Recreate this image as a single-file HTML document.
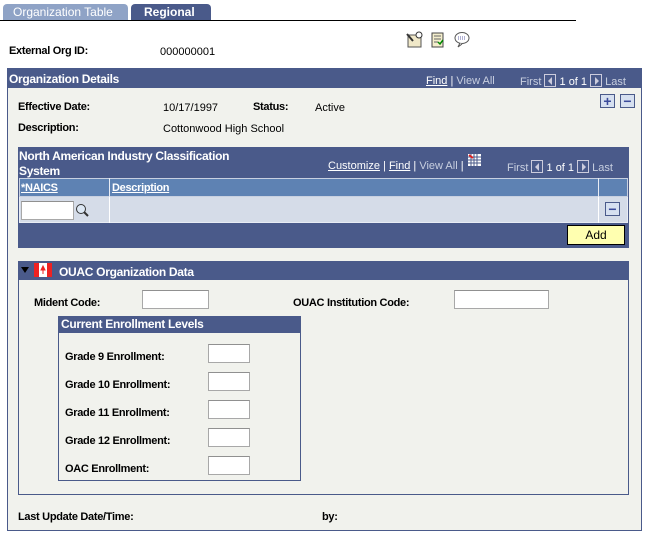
<!DOCTYPE html>
<html><head><style>
*{margin:0;padding:0;box-sizing:border-box}
body{width:646px;height:535px;background:#fff;font-family:"Liberation Sans",Arial,sans-serif;font-size:11px;color:#000;position:relative;overflow:hidden}
.a{position:absolute}
.b{font-weight:bold;letter-spacing:-0.3px}
.hd{background:#4a5a8a;color:#fff}
.inp{position:absolute;background:#fff;border:1px solid #a8a8a8;border-top-color:#909090}
.lk{color:#fff;text-decoration:underline}
.gr{color:#c8cfe0}
.arr{display:inline-block;width:12px;height:13px;border:1px solid #ccd;background:#4a5a8a;vertical-align:-2px;position:relative}
.arr.l:after{content:"";position:absolute;left:3px;top:2px;border-right:4px solid #ccd;border-top:4px solid transparent;border-bottom:4px solid transparent}
.arr.r:after{content:"";position:absolute;left:4px;top:2px;border-left:4px solid #ccd;border-top:4px solid transparent;border-bottom:4px solid transparent}
.btn{position:absolute;width:15px;height:14px;border:1px solid #4a5a8a;background:#d6e0f0;color:#3a4a9a;font-weight:bold;text-align:center;line-height:12px;font-size:14px}
</style></head><body>
<div class="a" style="left:3px;top:4px;width:125px;height:17px;background:#8fa3c6;border-radius:4px 4px 0 0;color:#fff;font-size:12px;padding:1px 0 0 10px">Organization Table</div>
<div class="a" style="left:131px;top:4px;width:80px;height:17px;background:#4a5a8a;border-radius:4px 4px 0 0;color:#fff;font-size:12px;font-weight:bold;padding:1px 0 0 13px">Regional</div>
<div class="a" style="left:0;top:20px;width:576px;height:1px;background:#000"></div>

<div class="a b" style="left:9px;top:45px">External Org ID:</div>
<div class="a" style="left:160px;top:46px">000000001</div>
<svg class="a" style="left:405px;top:31px" width="70" height="18">
<rect x="3" y="4" width="13" height="12" fill="#f0e8c8" stroke="#555"/><path d="M2 3 L8 10" stroke="#333" stroke-width="2"/><circle cx="14" cy="4" r="3" fill="#fff" stroke="#333"/>
<rect x="27" y="2" width="11" height="14" fill="#f4eecc" stroke="#444"/><path d="M29 5h7M29 8h7M29 11h4" stroke="#666"/><path d="M33 11l2 2 3-4" stroke="#080" stroke-width="1.5" fill="none"/>
<ellipse cx="57" cy="7" rx="7" ry="5.5" fill="#fff" stroke="#555"/><path d="M55 12l-2 4 4-3" fill="#fff" stroke="#555"/><path d="M53 6h8M53 8h8" stroke="#66a" stroke-dasharray="1 1"/>
</svg>

<div class="a" style="left:7px;top:68px;width:635px;height:463px;border:1px solid #4a5a8a;background:#f1f2ed"></div>
<div class="a hd" style="left:7px;top:68px;width:635px;height:20px"></div>
<div class="a b" style="left:9px;top:72px;color:#fff;font-size:12px">Organization Details</div>
<div class="a" style="left:426px;top:75px;color:#fff"><span class="lk">Find</span> | <span class="gr">View All</span></div>
<div class="a" style="left:520px;top:74px;color:#c8cfe0">First <span class="arr l"></span> <span style="color:#fff">1 of 1</span> <span class="arr r"></span> Last</div>
<div class="btn" style="left:600px;top:94px">+</div>
<div class="btn" style="left:620px;top:94px">−</div>

<div class="a b" style="left:18px;top:101px">Effective Date:</div>
<div class="a" style="left:163px;top:102px">10/17/1997</div>
<div class="a b" style="left:253px;top:101px">Status:</div>
<div class="a" style="left:315px;top:102px">Active</div>
<div class="a b" style="left:18px;top:122px">Description:</div>
<div class="a" style="left:163px;top:123px">Cottonwood High School</div>

<div class="a hd" style="left:18px;top:147px;width:611px;height:101px"></div>
<div class="a b" style="left:19px;top:149px;color:#fff;font-size:12px;line-height:15px">North American Industry Classification<br>System</div>
<div class="a" style="left:328px;top:160px;color:#fff"><span class="lk">Customize</span> | <span class="lk">Find</span> | <span class="gr">View All</span> |</div>
<svg class="a" style="left:468px;top:154px" width="13" height="12"><rect width="13" height="12" fill="#fff"/><path d="M0 3h13M0 6h13M0 9h13M3 0v12M6 0v12M9 0v12" stroke="#4a5a8a"/><path d="M1 1l4 3" stroke="#d22" stroke-width="2"/></svg>
<div class="a" style="left:507px;top:160px;color:#c8cfe0">First <span class="arr l"></span> <span style="color:#fff">1 of 1</span> <span class="arr r"></span> Last</div>
<div class="a" style="left:19px;top:178px;width:609px;height:19px;background:#5e82b3;border:1px solid #c8d0e0"></div>
<div class="a" style="left:109px;top:178px;width:1px;height:45px;background:#e8ecf4"></div>
<div class="a" style="left:598px;top:178px;width:1px;height:45px;background:#e8ecf4"></div>
<div class="a b lk" style="left:21px;top:182px">*NAICS</div>
<div class="a b lk" style="left:112px;top:182px">Description</div>
<div class="a" style="left:19px;top:197px;width:609px;height:26px;background:#d5dce8;border:1px solid #e8ecf4;border-top:none"></div>
<div class="a" style="left:109px;top:197px;width:1px;height:26px;background:#fff"></div>
<div class="a" style="left:598px;top:197px;width:1px;height:26px;background:#fff"></div>
<div class="inp" style="left:21px;top:201px;width:53px;height:19px"></div>
<svg class="a" style="left:75px;top:203px" width="14" height="15"><circle cx="6" cy="6" r="4.5" fill="#dde8f4" stroke="#333"/><path d="M9 9l4 4" stroke="#333" stroke-width="2"/></svg>
<div class="btn" style="left:605px;top:202px">−</div>
<div class="a" style="left:567px;top:225px;width:58px;height:20px;background:#ffffb0;border:1px solid #000;text-align:center;line-height:18px;font-size:12px">Add</div>

<div class="a" style="left:18px;top:261px;width:611px;height:234px;border:1px solid #4a5a8a"></div>
<div class="a hd" style="left:18px;top:261px;width:611px;height:19px"></div>
<div class="a" style="left:21px;top:267px;width:0;height:0;border-left:4px solid transparent;border-right:4px solid transparent;border-top:6px solid #000"></div>
<svg class="a" style="left:34px;top:263px" width="18" height="14"><rect width="18" height="14" fill="#fff"/><rect width="5" height="14" fill="#e22"/><rect x="13" width="5" height="14" fill="#e22"/><path d="M9 3l2 4h-4z M9 5v6" stroke="#e22" fill="#e22"/></svg>
<div class="a b" style="left:59px;top:265px;color:#fff;font-size:12px">OUAC Organization Data</div>

<div class="a b" style="left:34px;top:297px">Mident Code:</div>
<div class="inp" style="left:142px;top:290px;width:67px;height:19px"></div>
<div class="a b" style="left:293px;top:297px">OUAC Institution Code:</div>
<div class="inp" style="left:454px;top:290px;width:95px;height:19px"></div>

<div class="a" style="left:58px;top:316px;width:243px;height:165px;border:1px solid #4a5a8a"></div>
<div class="a hd b" style="left:58px;top:316px;width:243px;height:17px;padding:1px 0 0 3px;font-size:12px">Current Enrollment Levels</div>
<div class="a b" style="left:65px;top:351px">Grade 9 Enrollment:</div>
<div class="a b" style="left:65px;top:379px">Grade 10 Enrollment:</div>
<div class="a b" style="left:65px;top:407px">Grade 11 Enrollment:</div>
<div class="a b" style="left:65px;top:435px">Grade 12 Enrollment:</div>
<div class="a b" style="left:65px;top:463px">OAC Enrollment:</div>
<div class="inp" style="left:208px;top:344px;width:42px;height:19px"></div>
<div class="inp" style="left:208px;top:372px;width:42px;height:19px"></div>
<div class="inp" style="left:208px;top:400px;width:42px;height:19px"></div>
<div class="inp" style="left:208px;top:428px;width:42px;height:19px"></div>
<div class="inp" style="left:208px;top:456px;width:42px;height:19px"></div>

<div class="a b" style="left:18px;top:511px">Last Update Date/Time:</div>
<div class="a b" style="left:322px;top:511px">by:</div>
</body></html>
